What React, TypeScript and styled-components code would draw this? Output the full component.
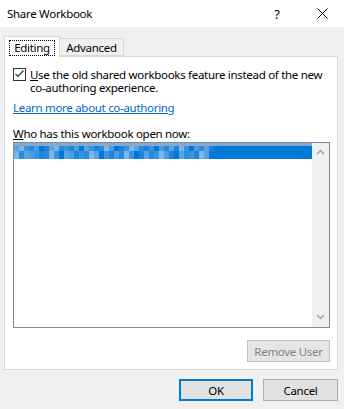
import React from "react";
import styled, { createGlobalStyle } from "styled-components";

const GlobalStyle = createGlobalStyle`
  html, body { margin: 0; padding: 0; background: #f0f0f0; }
  body { font-family: "Segoe UI", "Noto Sans", "Open Sans", sans-serif; font-size: 11.5px; letter-spacing: -0.3px; color: #000; }
  * { box-sizing: border-box; }
`;

const Window = styled.div`
  width: 344px;
  height: 409px;
  background: #f0f0f0;
  display: flex;
  flex-direction: column;
`;

const TitleBar = styled.div`
  height: 27px;
  background: #fff;
  display: flex;
  align-items: center;
  padding-left: 7px;
`;

const Title = styled.div`
  flex: 1;
  font-size: 11.5px;
  line-height: 16px;
  padding-top: 1px;
`;

const CaptionButton = styled.div<{ $w: number }>`
  width: ${(p) => p.$w}px;
  height: 27px;
  display: flex;
  align-items: center;
  justify-content: center;
  font-size: 13px;
`;

const Body = styled.div`
  flex: 1;
  display: flex;
  flex-direction: column;
  padding: 9px 6px 0 4px;
`;

const TabStrip = styled.div`
  display: flex;
  align-items: flex-end;
  height: 20px;
`;

const Tab = styled.div<{ $active?: boolean; $w: number }>`
  width: ${(p) => p.$w}px;
  height: ${(p) => (p.$active ? 21 : 18)}px;
  margin-bottom: ${(p) => (p.$active ? -1 : 0)}px;
  background: ${(p) => (p.$active ? "#fff" : "#f0f0f0")};
  border: 1px solid #d9d9d9;
  border-bottom: ${(p) => (p.$active ? "none" : "1px solid #d9d9d9")};
  border-left: ${(p) => (p.$active ? "1px solid #d9d9d9" : "none")};
  position: relative;
  z-index: ${(p) => (p.$active ? 1 : 0)};
  display: flex;
  justify-content: center;
  padding-top: ${(p) => (p.$active ? 4 : 2)}px;
  line-height: 14px;
`;

const FocusLabel = styled.span`
  outline: 1px dotted #000;
  outline-offset: 0;
  padding: 0 4px;
  height: 14px;
`;

const Panel = styled.div`
  height: 314px;
  background: #fff;
  border: 1px solid #d9d9d9;
  display: flex;
  flex-direction: column;
  padding: 11px 7px 7px 8px;
`;

const CheckRow = styled.div`
  display: flex;
  align-items: flex-start;
  gap: 4px;
`;

const CheckBox = styled.span`
  width: 13px;
  height: 13px;
  border: 1px solid #333;
  flex: none;
  display: flex;
  align-items: center;
  justify-content: center;
`;

const CheckLabel = styled.div`
  line-height: 13px;
  &::first-letter { text-decoration: underline; }
`;

const Link = styled.a`
  color: #0066cc;
  text-decoration: underline;
  margin-top: 6px;
  line-height: 15px;
  align-self: flex-start;
`;

const FieldLabel = styled.div`
  margin-top: 11px;
  line-height: 15px;
  &::first-letter { text-decoration: underline; }
`;

const ListBox = styled.div`
  margin-top: 1px;
  height: 186px;
  flex: none;
  border: 1px solid #828790;
  display: flex;
`;

const ListItems = styled.div`
  flex: 1;
  background: #fff;
`;

const SelectedRow = styled.div`
  height: 16px;
  background: #0078d7;
  display: flex;
  flex-direction: column;
`;

const RowTop = styled.div`
  height: 3px;
  background: #86a9cf;
`;

const MosaicRow = styled.div<{ $h: number }>`
  height: ${(p) => p.$h}px;
  display: flex;
`;

const Cell = styled.div<{ $c: string }>`
  width: 5px;
  height: 100%;
  background: ${(p) => p.$c};
`;

const ScrollBar = styled.div`
  width: 17px;
  background: #f0f0f0;
  display: flex;
  flex-direction: column;
  justify-content: space-between;
  align-items: center;
  padding: 6px 0 7px;
`;

const ButtonRow = styled.div<{ $pad: string }>`
  display: flex;
  justify-content: flex-end;
  gap: 10px;
  padding: ${(p) => p.$pad};
`;

const Button = styled.button<{ $w: number; $primary?: boolean }>`
  width: ${(p) => p.$w}px;
  height: 22px;
  background: #e1e1e1;
  border: ${(p) => (p.$primary ? "2px solid #0078d7" : "1px solid #adadad")};
  font-family: inherit;
  font-size: 11.5px;
  letter-spacing: -0.3px;
  color: #000;
  padding: 0;
  &:disabled {
    color: #838383;
    border-color: #bfbfbf;
    background: #e5e5e5;
  }
`;

const palette = ["#0078d7", "#1c84da", "#3a93de", "#5aa3e2", "#7eb6e8", "#2a8bdc", "#4a9be0"];
const row1 = "3425601345216032154601243512065314206531";
const row2 = "4536215420361254302165420135246103521430";

const Mosaic: React.FC<{ pattern: string; h: number }> = ({ pattern, h }) => (
  <MosaicRow $h={h}>
    {pattern.split("").map((d, i) => (
      <Cell key={i} $c={palette[Number(d)]} />
    ))}
  </MosaicRow>
);

const Chevron: React.FC<{ down?: boolean }> = ({ down }) => (
  <svg width="9" height="6" viewBox="0 0 9 6">
    <polyline
      points={down ? "1,1 4.5,4.5 8,1" : "1,5 4.5,1.5 8,5"}
      fill="none"
      stroke="#a3a3a3"
      strokeWidth="1.5"
    />
  </svg>
);

export default function App() {
  return (
    <>
      <GlobalStyle />
      <Window>
        <TitleBar>
          <Title>Share Workbook</Title>
          <CaptionButton $w={46}>?</CaptionButton>
          <CaptionButton $w={44}>
            <svg width="11" height="11" viewBox="0 0 11 11">
              <path d="M0.5 0.5 L10.5 10.5 M10.5 0.5 L0.5 10.5" stroke="#000" strokeWidth="1" />
            </svg>
          </CaptionButton>
        </TitleBar>
        <Body>
          <TabStrip>
            <Tab $active $w={56}>
              <FocusLabel>Editing</FocusLabel>
            </Tab>
            <Tab $w={64}>Advanced</Tab>
          </TabStrip>
          <Panel>
            <CheckRow>
              <CheckBox>
                <svg width="11" height="11" viewBox="0 0 11 11">
                  <polyline points="1.5,5 4,7.5 9.5,1.5" fill="none" stroke="#333" strokeWidth="1.2" />
                </svg>
              </CheckBox>
              <CheckLabel>
                Use the old shared workbooks feature instead of the new co-authoring experience.
              </CheckLabel>
            </CheckRow>
            <Link>Learn more about co-authoring</Link>
            <FieldLabel>Who has this workbook open now:</FieldLabel>
            <ListBox>
              <ListItems>
                <SelectedRow>
                  <RowTop />
                  <Mosaic pattern={row1} h={5} />
                  <Mosaic pattern={row2} h={8} />
                </SelectedRow>
              </ListItems>
              <ScrollBar>
                <Chevron />
                <Chevron down />
              </ScrollBar>
            </ListBox>
            <ButtonRow $pad="12px 0 0 0">
              <Button $w={83} disabled>
                Remove User
              </Button>
            </ButtonRow>
          </Panel>
          <ButtonRow $pad="9px 0 0 0">
            <Button $w={74} $primary>
              OK
            </Button>
            <Button $w={75}>Cancel</Button>
          </ButtonRow>
        </Body>
      </Window>
    </>
  );
}
